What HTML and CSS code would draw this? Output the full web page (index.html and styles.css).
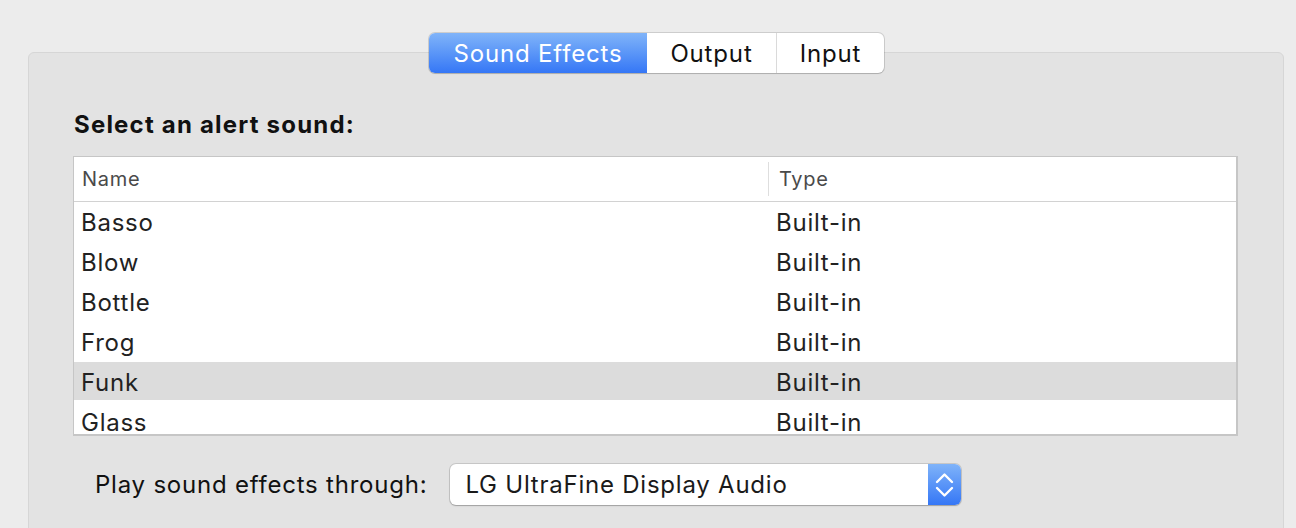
FILE: index.html
```html
<!DOCTYPE html>
<html>
<head>
<meta charset="utf-8">
<link rel="stylesheet" href="styles.css">
</head>
<body>
<div class="window">
  <div class="tabs-wrap">
    <div class="tabs">
      <div class="seg seg-effects active">Sound Effects</div>
      <div class="seg seg-output">Output</div>
      <div class="seg seg-input">Input</div>
    </div>
  </div>
  <div class="panel">
    <h2 class="heading">Select an alert sound:</h2>
    <div class="table">
      <div class="thead">
        <div class="col col-name">Name</div>
        <div class="col col-type">Type</div>
      </div>
      <div class="tbody">
        <div class="row"><div class="col col-name">Basso</div><div class="col col-type">Built-in</div></div>
        <div class="row"><div class="col col-name">Blow</div><div class="col col-type">Built-in</div></div>
        <div class="row"><div class="col col-name">Bottle</div><div class="col col-type">Built-in</div></div>
        <div class="row"><div class="col col-name">Frog</div><div class="col col-type">Built-in</div></div>
        <div class="row selected"><div class="col col-name">Funk</div><div class="col col-type">Built-in</div></div>
        <div class="row"><div class="col col-name">Glass</div><div class="col col-type">Built-in</div></div>
      </div>
    </div>
    <div class="output-row">
      <span class="label">Play sound effects through:</span>
      <div class="popup">
        <span class="popup-text">LG UltraFine Display Audio</span>
        <span class="popup-arrows">
          <svg width="33" height="40" viewBox="0 0 33 40"><path d="M9 17 L16.5 9.5 L24 17 M9 23 L16.5 30.5 L24 23" fill="none" stroke="#fff" stroke-width="2.4" stroke-linecap="round" stroke-linejoin="round"/></svg>
        </span>
      </div>
    </div>
  </div>
</div>
</body>
</html>
```

FILE: styles.css
```css
* { box-sizing: border-box; }
html, body { margin: 0; padding: 0; }
body {
  background: #ececec;
  font-family: Inter, "Liberation Sans", sans-serif;
  color: #222;
  width: 1296px;
  height: 528px;
  overflow: hidden;
}
.window {
  padding-top: 33px;
}
.tabs-wrap {
  display: flex;
  justify-content: center;
  position: relative;
  z-index: 1;
  margin: 0 12px 0 29px;
}
.tabs {
  display: flex;
  height: 40px;
  border-radius: 6px;
  background: #fff;
  overflow: hidden;
  box-shadow: 0 0 0 1px rgba(0,0,0,0.13), 0 1px 1px rgba(0,0,0,0.12);
}
.seg {
  height: 40px;
  line-height: 41px;
  font-size: 24px;
  letter-spacing: 0.85px;
  text-align: center;
  color: #111;
}
.seg-effects { width: 218px; }
.seg-output { width: 129px; }
.seg-input { width: 108px; border-left: 1px solid #dadada; }
.seg.active {
  background: linear-gradient(#80b4f9, #3577f6);
  color: #fff;
}
.panel {
  margin: -21px 12px 0 28px;
  height: 500px;
  background: #e3e3e3;
  border: 1px solid #d6d6d6;
  border-radius: 6px 6px 0 0;
  padding: 58px 45px 0 44px;
}
.heading {
  margin: 0 0 17px 1px;
  font-size: 24px;
  line-height: 28px;
  font-weight: 700;
  letter-spacing: 1.2px;
  color: #111;
}
.table {
  background: #fff;
  border-style: solid;
  border-color: #c6c6c6;
  border-width: 1px 2px 2px 1px;
}
.thead {
  display: flex;
  height: 45px;
  border-bottom: 1px solid #d2d2d2;
  font-size: 20px;
  letter-spacing: 0.7px;
  line-height: 44px;
  color: #4a4a4a;
  align-items: center;
}
.thead .col-name { padding-left: 8px; }
.thead .col-type {
  padding-left: 10px;
  border-left: 1px solid #dedede;
  line-height: 34px;
  height: 34px;
  display: flex;
  align-items: center;
}
.col-name { width: 694px; padding-left: 7px; }
.col-type { flex: 1; padding-left: 8px; }
.tbody {
  height: 232px;
  overflow: hidden;
}
.row {
  display: flex;
  height: 40px;
  padding-top: 1px;
  font-size: 24px;
  letter-spacing: 0.75px;
  line-height: 39px;
  color: #222;
}
.row.selected {
  background: #dcdcdc;
  box-shadow: inset 0 -2px 0 #fff;
}
.output-row {
  display: flex;
  align-items: center;
  margin-top: 28px;
  padding-left: 22px;
  gap: 23px;
}
.label {
  font-size: 24px;
  letter-spacing: 0.78px;
  color: #111;
}
.popup {
  display: flex;
  width: 511px;
  height: 41px;
  background: #fff;
  border-radius: 6px;
  overflow: hidden;
  box-shadow: 0 0 0 1px rgba(0,0,0,0.12), 0 1px 1.5px rgba(0,0,0,0.2);
}
.popup-text {
  flex: 1;
  padding-left: 15px;
  font-size: 24px;
  letter-spacing: 0.77px;
  line-height: 41px;
  color: #1a1a1a;
}
.popup-arrows {
  width: 33px;
  background: linear-gradient(#7fb3f9, #3577f6);
  display: flex;
  align-items: center;
}
```
